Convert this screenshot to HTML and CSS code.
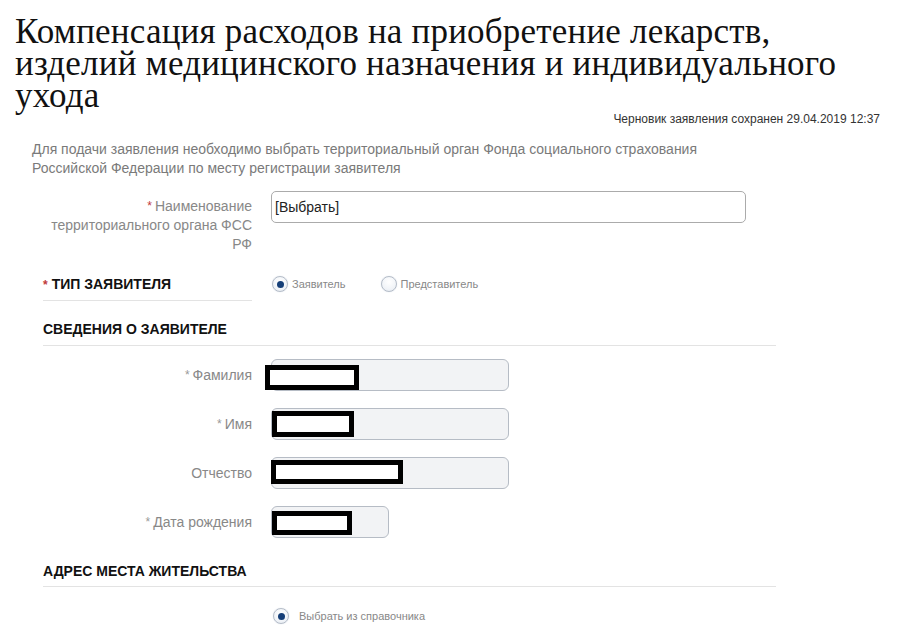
FILE: index.html
```html
<!DOCTYPE html>
<html lang="ru">
<head>
<meta charset="utf-8">
<title>Компенсация расходов</title>
<link rel="stylesheet" href="styles.css">
</head>
<body>
<div class="page">
  <h1 class="title">Компенсация расходов на приобретение лекарств,<br>изделий медицинского назначения и индивидуального<br>ухода</h1>
  <div class="draft">Черновик заявления сохранен 29.04.2019 12:37</div>
  <p class="info">Для подачи заявления необходимо выбрать территориальный орган Фонда социального страхования<br>Российской Федерации по месту регистрации заявителя</p>

  <div class="form">
    <div class="row row-top">
      <div class="label label-multi"><span class="req">*</span>Наименование территориального органа ФСС РФ</div>
      <div class="select">[Выбрать]</div>
    </div>

    <div class="row row-type">
      <div class="label-strong"><span class="req">*</span>Тип заявителя</div>
      <div class="radios">
        <span class="radio checked"></span><span class="radio-text">Заявитель</span>
        <span class="radio radio-second"></span><span class="radio-text">Представитель</span>
      </div>
    </div>

    <div class="section section-first">Сведения о заявителе</div>

    <div class="row field">
      <div class="label"><span class="req grey">*</span>Фамилия</div>
      <div class="input"><span class="redact r1"></span></div>
    </div>
    <div class="row field">
      <div class="label"><span class="req grey">*</span>Имя</div>
      <div class="input"><span class="redact r2"></span></div>
    </div>
    <div class="row field">
      <div class="label">Отчество</div>
      <div class="input"><span class="redact r3"></span></div>
    </div>
    <div class="row field">
      <div class="label"><span class="req grey">*</span>Дата рождения</div>
      <div class="input input-date"><span class="redact r4"></span></div>
    </div>

    <div class="section section-addr">Адрес места жительства</div>

    <div class="row row-addr">
      <div class="label"></div>
      <div class="radios">
        <span class="radio checked"></span><span class="radio-text radio-text-wide">Выбрать из справочника</span>
      </div>
    </div>
  </div>
</div>
</body>
</html>
```

FILE: styles.css
```css
html, body {
  margin: 0;
  padding: 0;
  background: #fff;
}

body {
  font-family: "Liberation Sans", Arial, sans-serif;
  color: #333;
}

.page {
  width: 908px;
  height: 634px;
  overflow: hidden;
}

.title {
  margin: 0;
  padding: 16px 0 0 15px;
  font-family: "Liberation Serif", "Times New Roman", serif;
  font-weight: normal;
  font-size: 35px;
  letter-spacing: 0.2px;
  line-height: 32px;
  color: #111;
}

.draft {
  margin-top: 0;
  padding-right: 28px;
  text-align: right;
  font-size: 12px;
  line-height: 14px;
  color: #333;
}

.info {
  margin: 14px 0 0 32px;
  font-size: 14px;
  line-height: 19px;
  color: #7a7a7a;
}

.form {
  margin-left: 43px;
  width: 733px;
}

.row {
  display: flex;
  align-items: flex-start;
}

.label {
  width: 209px;
  flex: none;
  margin-right: 19px;
  text-align: right;
  font-size: 14px;
  line-height: 19px;
  color: #888;
}

.req {
  color: #c0393b;
  font-size: 12px;
  margin-right: 3px;
  vertical-align: 1px;
}

.req.grey {
  color: #999;
}

.row-top {
  margin-top: 13px;
}

.label-multi {
  padding-top: 6px;
}

.select {
  box-sizing: border-box;
  width: 475px;
  height: 32px;
  border: 1px solid #ababab;
  border-radius: 5px;
  padding: 0 3px;
  font-size: 14px;
  line-height: 30px;
  color: #222;
}

.row-type {
  margin-top: 22px;
}

.label-strong {
  width: 209px;
  flex: none;
  margin-right: 19px;
  padding-bottom: 7px;
  border-bottom: 1px solid #e3e3e3;
  font-size: 14px;
  line-height: 16px;
  font-weight: bold;
  text-transform: uppercase;
  color: #111;
}

.label-strong .req {
  margin-right: 4px;
  vertical-align: 0;
}

.radios {
  display: flex;
  align-items: center;
  height: 16px;
  margin-left: 1px;
}

.radio {
  box-sizing: border-box;
  width: 16px;
  height: 16px;
  border-radius: 50%;
  border: 1px solid #b4bcc8;
  background: radial-gradient(circle at 50% 35%, #ffffff 0%, #f1f4f8 60%, #e2e8f0 100%);
  box-shadow: 0 0 1px rgba(120, 140, 170, 0.4);
  display: flex;
  align-items: center;
  justify-content: center;
  flex: none;
}

.radio.checked::after {
  content: "";
  width: 7px;
  height: 7px;
  border-radius: 50%;
  background: #163f78;
}

.radio-second {
  margin-left: 35px;
}

.radio-text {
  margin-left: 4px;
  font-size: 11px;
  color: #888;
}

.radio-text-wide {
  margin-left: 10px;
}

.section {
  font-size: 14px;
  line-height: 16px;
  font-weight: bold;
  text-transform: uppercase;
  color: #111;
  padding-bottom: 8px;
  border-bottom: 1px solid #e3e3e3;
}

.section-first {
  margin-top: 20px;
}

.field {
  align-items: center;
  margin-top: 17px;
}

.section-first + .field {
  margin-top: 13px;
}

.input {
  position: relative;
  box-sizing: border-box;
  width: 238px;
  height: 32px;
  border: 1px solid #b6bcc5;
  border-radius: 6px;
  background: #f2f3f5;
}

.input-date {
  width: 118px;
}

.redact {
  position: absolute;
  box-sizing: border-box;
  border: 5px solid #000;
  background: #fff;
}

.r1 { left: -7px; top: 5px; width: 94px; height: 25px; }
.r2 { left: 0; top: 2px; width: 82px; height: 26px; }
.r3 { left: -1px; top: 2px; width: 132px; height: 24px; }
.r4 { left: 0; top: 4px; width: 80px; height: 24px; }

.section-addr {
  margin-top: 25px;
  padding-bottom: 7px;
}

.row-addr {
  margin-top: 21px;
}

.row-addr .radios {
  margin-left: 2px;
}
```
